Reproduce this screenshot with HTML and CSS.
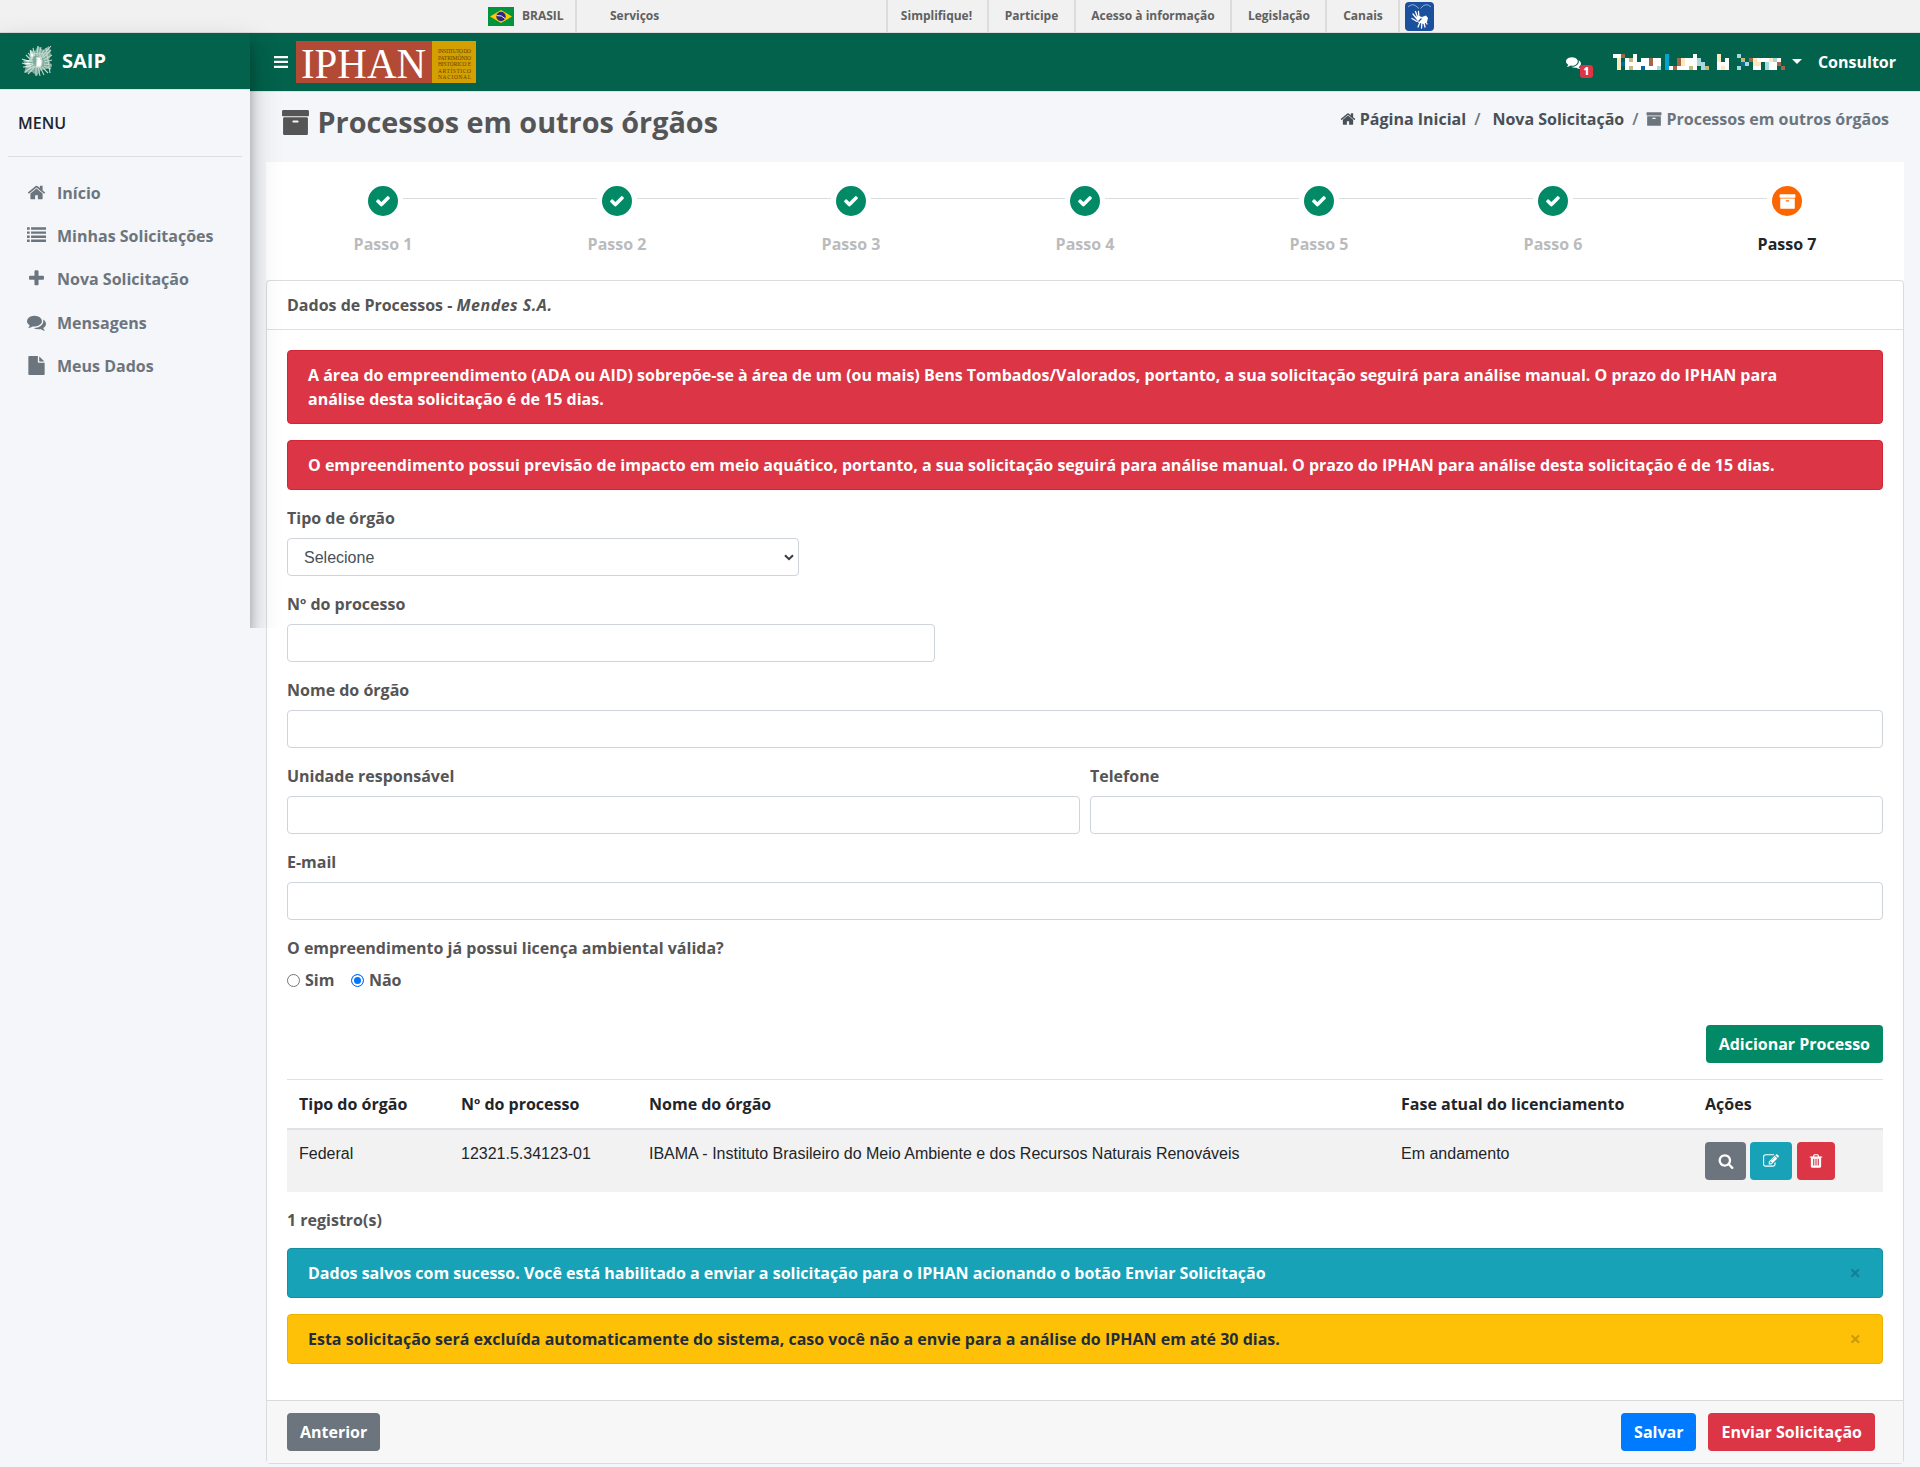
FILE: index.html
```html
<!DOCTYPE html>
<html lang="pt-BR">
<head>
<meta charset="utf-8">
<title>SAIP - Processos em outros órgãos</title>
<link rel="stylesheet" href="styles.css">
</head>
<body>
<svg class="sprite" aria-hidden="true">
  <symbol id="home" viewBox="0 0 1792 1792"><path d="M1472 992v480q0 26-19 45t-45 19h-384v-384h-256v384h-384q-26 0-45-19t-19-45v-480q0-1 .5-3t.5-3l575-474 575 474q1 2 1 6zm223-69l-62 74q-8 9-21 11h-3q-13 0-21-7l-692-577-692 577q-12 8-24 7-13-2-21-11l-62-74q-8-10-7-23.5t11-21.5l719-599q32-26 76-26t76 26l244 204v-195q0-14 9-23t23-9h192q14 0 23 9t9 23v408l219 182q10 8 11 21.5t-7 23.5z"/></symbol>
  <symbol id="list" viewBox="0 0 1792 1792"><path d="M0 1280h256v224H0zM0 896h256v224H0zM0 512h256v224H0zM0 128h256v224H0zM384 1280h1408v224H384zM384 896h1408v224H384zM384 512h1408v224H384zM384 128h1408v224H384z"/></symbol>
  <symbol id="plus" viewBox="0 0 1792 1792"><path d="M1600 736v192q0 40-28 68t-68 28h-416v416q0 40-28 68t-68 28h-192q-40 0-68-28t-28-68v-416h-416q-40 0-68-28t-28-68v-192q0-40 28-68t68-28h416v-416q0-40 28-68t68-28h192q40 0 68 28t28 68v416h416q40 0 68 28t28 68z"/></symbol>
  <symbol id="comments" viewBox="0 0 1792 1792"><path d="M1408 768q0 139-94 257t-256.500 186.500-353.500 68.500q-86 0-176-16-124 88-278 128-36 9-86 16h-3q-11 0-20.500-8t-11.500-21q-1-3-1-6.500t.5-6.500 2-6l2.500-5 3.500-5.500 4-5 4.500-5 4-4.500q5-6 23-25t26-29.500 22.500-29 25-38.500 20.500-44q-124-72-195-177t-71-224q0-139 94-257t256.500-186.500 353.500-68.500 353.500 68.500 256.500 186.500 94 257zm384 256q0 120-71 224.500t-195 176.500q10 24 20.500 44t25 38.500 22.500 29 26 29.500 23 25q1 1 4 4.500t4.500 5 4 5 3.500 5.500l2.500 5 2 6 .5 6.500-1 6.500q-3 14-13 22t-22 7q-50-7-86-16-154-40-278-128-90 16-176 16-271 0-472-132 58 4 88 4 161 0 309-45t264-129q125-92 192-212t67-254q0-77-23-152 129 71 204 178t75 230z"/></symbol>
  <symbol id="file" viewBox="0 0 1792 1792"><path d="M1152 512v-472q22 14 36 28l408 408q14 14 28 36h-472zm-128 32q0 40 28 68t68 28h544v1056q0 40-28 68t-68 28h-1344q-40 0-68-28t-28-68v-1600q0-40 28-68t68-28h800v544z"/></symbol>
  <symbol id="check" viewBox="0 0 1792 1792"><path d="M1671 566q0 40-28 68l-724 724-136 136q-28 28-68 28t-68-28l-136-136-362-362q-28-28-28-68t28-68l136-136q28-28 68-28t68 28l294 295 656-657q28-28 68-28t68 28l136 136q28 28 28 68z"/></symbol>
  <symbol id="archive" viewBox="0 0 1792 1792"><path d="M1088 832q0-26-19-45t-45-19h-256q-26 0-45 19t-19 45 19 45 45 19h256q26 0 45-19t19-45zm576-192v960q0 26-19 45t-45 19h-1408q-26 0-45-19t-19-45v-960q0-26 19-45t45-19h1408q26 0 45 19t19 45zm64-448v256q0 26-19 45t-45 19h-1536q-26 0-45-19t-19-45v-256q0-26 19-45t45-19h1536q26 0 45 19t19 45z"/></symbol>
  <symbol id="search" viewBox="0 0 1792 1792"><path d="M1216 832q0-185-131.500-316.500t-316.500-131.500-316.500 131.500-131.500 316.500 131.500 316.500 316.500 131.500 316.500-131.500 131.500-316.500zm512 832q0 52-38 90t-90 38q-54 0-90-38l-343-342q-179 124-399 124-143 0-273.500-55.500t-225-150-150-225-55.500-273.500 55.500-273.500 150-225 225-150 273.500-55.500 273.500 55.500 225 150 150 225 55.500 273.500q0 220-124 399l343 343q37 37 37 90z"/></symbol>
  <symbol id="edit" viewBox="0 0 1792 1792"><path d="M888 1184l116-116-152-152-116 116v56h96v96h56zm440-720q-16-16-33 1l-350 350q-17 17-1 33t33-1l350-350q17-17 1-33zm80 594v190q0 119-84.500 203.500t-203.500 84.500h-832q-119 0-203.500-84.500t-84.500-203.500v-832q0-119 84.500-203.500t203.500-84.500h832q63 0 117 25 15 7 18 23 3 17-9 29l-49 49q-14 14-32 8-23-6-45-6h-832q-66 0-113 47t-47 113v832q0 66 47 113t113 47h832q66 0 113-47t47-113v-126q0-13 9-22l64-64q15-15 35-7t20 29zm-96-738l288 288-672 672h-288v-288zm444 132l-92 92-288-288 92-92q28-28 68-28t68 28l152 152q28 28 28 68t-28 68z"/></symbol>
  <symbol id="trash" viewBox="0 0 1792 1792"><path d="M704 1376v-704q0-14-9-23t-23-9h-64q-14 0-23 9t-9 23v704q0 14 9 23t23 9h64q14 0 23-9t9-23zm256 0v-704q0-14-9-23t-23-9h-64q-14 0-23 9t-9 23v704q0 14 9 23t23 9h64q14 0 23-9t9-23zm256 0v-704q0-14-9-23t-23-9h-64q-14 0-23 9t-9 23v704q0 14 9 23t23 9h64q14 0 23-9t9-23zm-544-992h448l-48-117q-7-9-17-11h-317q-10 2-17 11zm928 32v64q0 14-9 23t-23 9h-96v948q0 83-47 143.500t-113 60.500h-832q-66 0-113-58.500t-47-141.500v-952h-96q-14 0-23-9t-9-23v-64q0-14 9-23t23-9h309l70-167q15-37 54-63t79-26h320q40 0 79 26t54 63l70 167h309q14 0 23 9t9 23z"/></symbol>
</svg>

<div class="govbar">
  <a class="gov-brasil">
    <svg width="26" height="19" viewBox="0 0 26 19"><rect width="26" height="19" fill="#009440"/><path d="M2 9.500 13 3l11 6.500L13 16z" fill="#ffcb00"/><circle cx="13" cy="9.500" r="4.700" fill="#302681"/><path d="M8.600 8.600q5-.8 8.500 3" stroke="#fff" stroke-width=".9" fill="none"/></svg>
    BRASIL
  </a>
  <a class="gov-serv">Serviços</a>
  <nav class="gov-links"><a>Simplifique!</a><a>Participe</a><a>Acesso à informação</a><a>Legislação</a><a>Canais</a></nav>
  <svg class="vlibras" width="29" height="29" viewBox="0 0 29 29"><rect width="29" height="29" rx="4" fill="#1b509e"/><path d="M3 5q4-4 8-1l3 2.500M26 5q-4-4-8-1l-2.500 2.500" stroke="#8fa9d0" stroke-width="1" fill="none"/><path d="M8 12l4 5M10.500 9.500l2.500 7M13.500 9.500l.5 7M7 16.500l5 3M13 25l2.500-6M16.500 26l.5-7M20 25l-1.500-6M22 22l-3-5" stroke="#fff" stroke-width="1.300" stroke-linecap="round"/><path d="M11 15l3-1 3 1 4-1.500 2 2.500-1 4-3 2-6-1.500z" fill="#fff"/><path d="M13.500 19.500l3-3" stroke="#1b509e" stroke-width="1.200"/></svg>
</div>

<div class="app">
  <aside class="sidebar">
    <a class="brand">
      <svg width="32" height="32" viewBox="0 0 32 32" fill="none" stroke="#c3d8cf" stroke-width="1.100"><path fill="#7fab9b" stroke="none" d="M9 5l5 1 3-5 5 4 6-4 2 9-2 5 3 7-5 2-6 1-4 6-5-4-8 1 2-7-3-5 6-1z"/><path d="M1 14l6 3 5-1M1 18l6 2 5-2M2 22l6 0 5-3M4 27l5-4 5-2M7 29l5-5 2-3M9 5l4 5-3 5M12 3l2 8M17 1l-1 10M20 2l-2 9M23 5l-4 7M30 1l-7 8-4 6M30 5l-8 8M31 10l-8 5M31 15l-8 2M31 20l-8-1M30 24l-7-3M27 28l-6-6M23 30l-4-8M19 31l-2-10M15 31v-10M7 8l5 6M5 10l6 6M15 13q6-3 6 4t-6 5l1-8M25 3l4 25M10 8l13 1"/></svg>
      <span>SAIP</span>
    </a>
    <div class="menu-title">MENU</div>
    <nav class="menu">
      <a><svg class="ico"><use href="#home"/></svg>Início</a>
      <a><svg class="ico"><use href="#list"/></svg>Minhas Solicitações</a>
      <a><svg class="ico"><use href="#plus"/></svg>Nova Solicitação</a>
      <a><svg class="ico"><use href="#comments"/></svg>Mensagens</a>
      <a><svg class="ico"><use href="#file"/></svg>Meus Dados</a>
    </nav>
  </aside>

  <div class="main">
    <header class="navbar">
      <svg class="burger" width="14" height="12" viewBox="0 0 14 12" fill="#fff"><path d="M0 0h14v2.300H0zM0 4.800h14v2.300H0zM0 9.700h14v2.300H0z"/></svg>
      <svg class="iphan" width="180" height="42" viewBox="0 0 180 42">
        <rect width="136" height="42" fill="#b34a36"/><rect x="136" width="44" height="42" fill="#d3a000"/>
        <text x="5" y="37" class="iphan-name" textLength="125" lengthAdjust="spacingAndGlyphs">IPHAN</text>
        <g class="iphan-sub"><text x="142" y="12" textLength="33">INSTITUTO DO</text><text x="142" y="18.500" textLength="33">PATRIMÔNIO</text><text x="142" y="25" textLength="33">HISTÓRICO E</text><text x="142" y="31.500" textLength="33">ARTÍSTICO</text><text x="142" y="38" textLength="33">NACIONAL</text></g>
      </svg>
      <div class="nav-right">
        <span class="chat"><svg class="ico-chat"><use href="#comments"/></svg><b class="badge">1</b></span>
        <svg class="masked" width="172" height="16" viewBox="0 0 43 4" shape-rendering="crispEdges">
          <path fill="#fff" d="M0 0h2v1H0zM5 0h1v1H5zM20 0h1v1h-1zM3 1h9v3H3zM18 1h3v3h-3zM26 1h3v3h-3zM36 1h6v2h-6zM32 1h1v1h-1zM35 3h2v1h-2zM39 3h2v1h-2zM14 3h4v1h-4z"/>
          <path fill="#fee9bd" d="M1 1h1v3H1zM17 1h1v2h-1zM26 0h1v2h-1zM27 3h1v1h-1zM35 1h1v2h-1zM39 1h1v1h-1zM36 2h1v1h-1z"/>
          <path fill="#a5654b" d="M2 0h1v1H2zM9 1h1v2H9zM16 1h1v2h-1zM15 3h1v1h-1zM34 1h1v1h-1zM42 3h1v1h-1zM41 2h1v1h-1z"/>
          <path fill="#0868a6" d="M2 2h1v1H2zM7 3h1v1H7zM32 2h1v1h-1z"/>
          <path fill="#00a6d3" d="M13 0h1v4h-1z"/>
          <path fill="#a6d9dd" d="M11 3h1v1h-1zM21 1h1v2h-1zM22 3h1v1h-1zM31 0h1v1h-1zM31 3h1v1h-1zM33 2h1v1h-1zM38 2h1v2h-1zM40 1h1v1h-1zM22 2h1v1h-1z"/>
          <path fill="#c7b875" d="M4 1h1v1H4zM4 3h1v1H4zM19 3h1v1h-1zM32 1h1v1h-1zM23 3h1v1h-1z"/>
          <path fill="#02624b" d="M6 1h1v1H6zM27 1h1v1h-1zM37 2h1v1h-1z"/>
        </svg>
        <i class="caret"></i>
        <span class="role">Consultor</span>
      </div>
    </header>

    <div class="page-head">
      <h1><svg class="ico-title"><use href="#archive"/></svg>Processos em outros órgãos</h1>
      <div class="crumbs"><svg class="ico-c"><use href="#home"/></svg><span>Página Inicial</span><i>/</i><span class="c2">Nova Solicitação</span><i>/</i><span class="here"><svg class="ico-c"><use href="#archive"/></svg>Processos em outros órgãos</span></div>
    </div>

    <div class="content">
      <div class="steps">
        <div class="step"><span class="dot"><svg><use href="#check"/></svg></span>Passo 1</div>
        <div class="step"><span class="dot"><svg><use href="#check"/></svg></span>Passo 2</div>
        <div class="step"><span class="dot"><svg><use href="#check"/></svg></span>Passo 3</div>
        <div class="step"><span class="dot"><svg><use href="#check"/></svg></span>Passo 4</div>
        <div class="step"><span class="dot"><svg><use href="#check"/></svg></span>Passo 5</div>
        <div class="step"><span class="dot"><svg><use href="#check"/></svg></span>Passo 6</div>
        <div class="step current"><span class="dot"><svg><use href="#archive"/></svg></span>Passo 7</div>
      </div>

      <section class="card">
        <div class="card-header">Dados de Processos - <em>Mendes S.A.</em></div>
        <div class="card-body">
          <div class="alert danger">A área do empreendimento (ADA ou AID) sobrepõe-se à área de um (ou mais) Bens Tombados/Valorados, portanto, a sua solicitação seguirá para análise manual. O prazo do IPHAN para análise desta solicitação é de 15 dias.</div>
          <div class="alert danger">O empreendimento possui previsão de impacto em meio aquático, portanto, a sua solicitação seguirá para análise manual. O prazo do IPHAN para análise desta solicitação é de 15 dias.</div>
          <div class="field w-tipo"><label>Tipo de órgão</label><div class="control select">Selecione<svg width="10" height="7" viewBox="0 0 10 7"><path d="M1 1.200l4 4 4-4" fill="none" stroke="#343a40" stroke-width="2"/></svg></div></div>
          <div class="field w-num"><label>Nº do processo</label><input class="control"></div>
          <div class="field"><label>Nome do órgão</label><input class="control"></div>
          <div class="row">
            <div class="field"><label>Unidade responsável</label><input class="control"></div>
            <div class="field"><label>Telefone</label><input class="control"></div>
          </div>
          <div class="field"><label>E-mail</label><input class="control"></div>
          <div class="question"><label>O empreendimento já possui licença ambiental válida?</label>
            <div class="radios"><span class="radio"></span>Sim<span class="radio on"></span>Não</div>
          </div>
          <div class="add"><button class="btn green">Adicionar Processo</button></div>
          <table class="table">
            <colgroup><col class="k1"><col class="k2"><col class="k3"><col class="k4"><col></colgroup>
            <thead><tr><th>Tipo do órgão</th><th>Nº do processo</th><th>Nome do órgão</th><th>Fase atual do licenciamento</th><th>Ações</th></tr></thead>
            <tbody><tr><td>Federal</td><td>12321.5.34123-01</td><td>IBAMA - Instituto Brasileiro do Meio Ambiente e dos Recursos Naturais Renováveis</td><td>Em andamento</td>
              <td><div class="actions"><button class="btn gray b1"><svg><use href="#search"/></svg></button><button class="btn teal b2"><svg><use href="#edit"/></svg></button><button class="btn red b3"><svg><use href="#trash"/></svg></button></div></td></tr></tbody>
          </table>
          <p class="count">1 registro(s)</p>
          <div class="alert info">Dados salvos com sucesso. Você está habilitado a enviar a solicitação para o IPHAN acionando o botão Enviar Solicitação<span class="close">×</span></div>
          <div class="alert warning">Esta solicitação será excluída automaticamente do sistema, caso você não a envie para a análise do IPHAN em até 30 dias.<span class="close">×</span></div>
        </div>
        <div class="card-footer"><button class="btn gray">Anterior</button><div class="right"><button class="btn blue">Salvar</button><button class="btn red">Enviar Solicitação</button></div></div>
      </section>
    </div>
  </div>
</div>
</body>
</html>
```
FILE: styles.css
```css
* { box-sizing: border-box; }
body { margin: 0; height: 1467px; overflow: hidden; background: #f4f6f9; color: #555; font: 700 16px/24px "Open Sans", sans-serif; }
.sprite { position: absolute; width: 0; height: 0; }
svg { fill: currentColor; flex: none; display: block; }

/* Government bar */
.govbar { display: flex; align-items: center; height: 33px; padding-left: 488px; background: #f1f1f1; border-bottom: 1px solid #dcdcdc; font-size: 12px; color: #606060; line-height: 32px; }
.gov-brasil { display: flex; align-items: center; gap: 8px; width: 89px; border-right: 2px solid #dcdcdc; }
.gov-serv { width: 309px; padding-left: 33px; }
.gov-links { display: flex; border-left: 2px solid #dcdcdc; }
.gov-links a { border-right: 2px solid #dcdcdc; text-align: center; width: 101px; padding-right: 2px; }
.gov-links a:nth-child(2) { width: 87px; padding-right: 0; }
.gov-links a:nth-child(3) { width: 156px; padding: 0; }
.gov-links a:nth-child(4) { width: 95px; padding: 0 0 0 1px; }
.gov-links a:nth-child(5) { width: 73px; padding: 0 0 0 1px; }
.vlibras { margin-left: 5px; }

.app { display: flex; }
.sidebar { width: 250px; height: 595px; flex: none; position: relative; z-index: 2; background: #f4f6f9; box-shadow: 0 14px 28px rgba(0,0,0,.25), 0 10px 10px rgba(0,0,0,.22); clip-path: inset(-20px -60px 0 0); }
.brand { display: flex; align-items: center; gap: 9px; height: 57px; padding: 0 0 1px 21px; background: #02624b; border-bottom: 1px solid #dee2e6; color: #fff; font-size: 20px; }
.menu-title { margin: 0 8px; padding: 21px 10px 21px; border-bottom: 1px solid #dbdfe3; color: #212529; line-height: 24px; font-weight: 600; }
.menu { padding-top: 14px; color: #6c757d; }
.menu a { display: flex; align-items: center; height: 43.300px; padding-left: 27px; gap: 11px; }
.ico { width: 19px; height: 19px; margin-top: -1px; }

.main { flex: 1; min-width: 0; }
.navbar { display: flex; align-items: center; height: 59px; padding: 0 24px 1px; background: #02624b; border-bottom: 1px solid #dee2e6; color: #fff; }
.iphan { margin-left: 8px; overflow: visible; }
.iphan-name { font: 43px "Liberation Serif", serif; fill: #fff; }
.iphan-sub { font: 5.500px "Liberation Serif", serif; fill: #6b4100; }
.nav-right { display: flex; align-items: center; margin-left: auto; }
.chat { position: relative; width: 47px; height: 24px; }
.ico-chat { width: 15px; height: 15px; margin-top: 5px; }
.badge { position: absolute; left: 14px; top: 15px; width: 13px; height: 13px; border-radius: 3px; background: #dc3545; font-size: 9.600px; line-height: 13px; text-align: center; }
.caret { border: 5px solid transparent; border-top-color: #fff; border-bottom: 0; margin: 0 16px 0 7px; }

.page-head { display: flex; justify-content: space-between; height: 70px; padding: 13px 31px 0 31px; }
h1 { display: flex; align-items: center; gap: 7.500px; margin: 0; height: 34px; font-size: 28.800px; }
.ico-title { width: 29px; height: 29px; }
.crumbs { display: flex; align-items: center; height: 28px; color: #495057; }
.crumbs i { font-style: normal; font-weight: 600; color: #6c757d; margin: 0 8px; }
.crumbs .c2 { margin-left: 4px; }
.ico-c { width: 16px; height: 16px; margin-right: 4px; }
.here { display: flex; align-items: center; color: #6c757d; }

.content { padding: 0 16px; }
.steps { display: grid; grid-template-columns: repeat(7, 1fr); height: 118px; padding-top: 24px; background: #fff; color: #bbb; }
.step { position: relative; display: flex; flex-direction: column; align-items: center; gap: 16px; }
.step + .step::before { content: ""; position: absolute; top: 12px; left: -97px; width: 194px; height: 1px; background: #d9dcdf; }
.dot { display: grid; place-items: center; width: 30px; height: 30px; border-radius: 50%; background: #028a66; color: #fff; }
.dot svg { width: 16px; height: 16px; }
.current { color: #212529; }
.current .dot { background: #fd6500; }
.current .dot svg { width: 17px; height: 17px; }

.card { background: #fff; border: 1px solid #d9dbdd; border-radius: 4px; }
.card-header { height: 49px; padding: 12px 20px; border-bottom: 1px solid #dfdfdf; }
.card-header em { letter-spacing: .5px; }
.card-body { padding: 20px; }
.alert { position: relative; margin-bottom: 16px; padding: 12px 64px 12px 20px; border: 1px solid; border-radius: 4px; color: #fff; }
.danger { background: #dc3545; border-color: #d32535; }
.info { background: #17a2b8; border-color: #148ea1; }
.warning { background: #ffc107; border-color: #edb100; color: #1f2d3d; }
.close { position: absolute; right: 21px; top: 12px; color: #000; opacity: .2; font-size: 20px; }
.field { margin-bottom: 16px; flex: 1; }
label { display: block; margin-bottom: 8px; }
.control { display: block; width: 100%; height: 38px; border: 1px solid #ced4da; border-radius: 4px; background: #fff; font: 16px/36px "Liberation Sans", sans-serif; color: #495057; }
.select { display: flex; align-items: center; justify-content: space-between; padding: 1px 4px 0 16px; }
.w-tipo { width: 512px; }
.w-num { width: 648px; }
.row { display: flex; gap: 10px; }
.radios { display: flex; align-items: center; height: 24px; }
.radio { width: 13px; height: 13px; border: 1px solid #767676; border-radius: 50%; margin-right: 5px; }
.radio.on { margin-left: 16.500px; border-color: #0075ff; background: #0075ff; box-shadow: inset 0 0 0 2px #fff; }
.add { display: flex; justify-content: flex-end; margin: 33px 0 16px; }
.btn { display: flex; align-items: center; justify-content: center; height: 38px; padding: 0 13px; border: 0; border-radius: 4px; color: #fff; font: 700 16px "Open Sans", sans-serif; }
.green { background: #028a66; }
.gray { background: #6c757d; }
.teal { background: #17a2b8; }
.red { background: #dc3545; }
.blue { background: #007bff; }
.table { width: 100%; table-layout: fixed; border-spacing: 0; margin-bottom: 16px; color: #212529; }
.k1 { width: 162px; } .k2 { width: 188px; } .k3 { width: 752px; } .k4 { width: 304px; }
th { padding: 12px; border-top: 1px solid #dee2e6; border-bottom: 2px solid #dee2e6; text-align: left; font-weight: 700; }
td { padding: 12px; vertical-align: top; background: #f2f2f2; font: 16px/24px "Liberation Sans", sans-serif; }
.actions { display: flex; }
.actions .btn { padding: 0; }
.actions svg { width: 16px; height: 16px; }
.b1 { width: 41px; } .b2 { width: 42px; margin: 0 5px 0 4px; } .b3 { width: 38px; }
.count { margin: 0 0 16px; }
.card-footer { display: flex; justify-content: space-between; height: 63px; padding: 12px 28px 12px 20px; border-top: 1px solid #dadada; background: #f7f7f7; }
.right { display: flex; gap: 12px; }
```
